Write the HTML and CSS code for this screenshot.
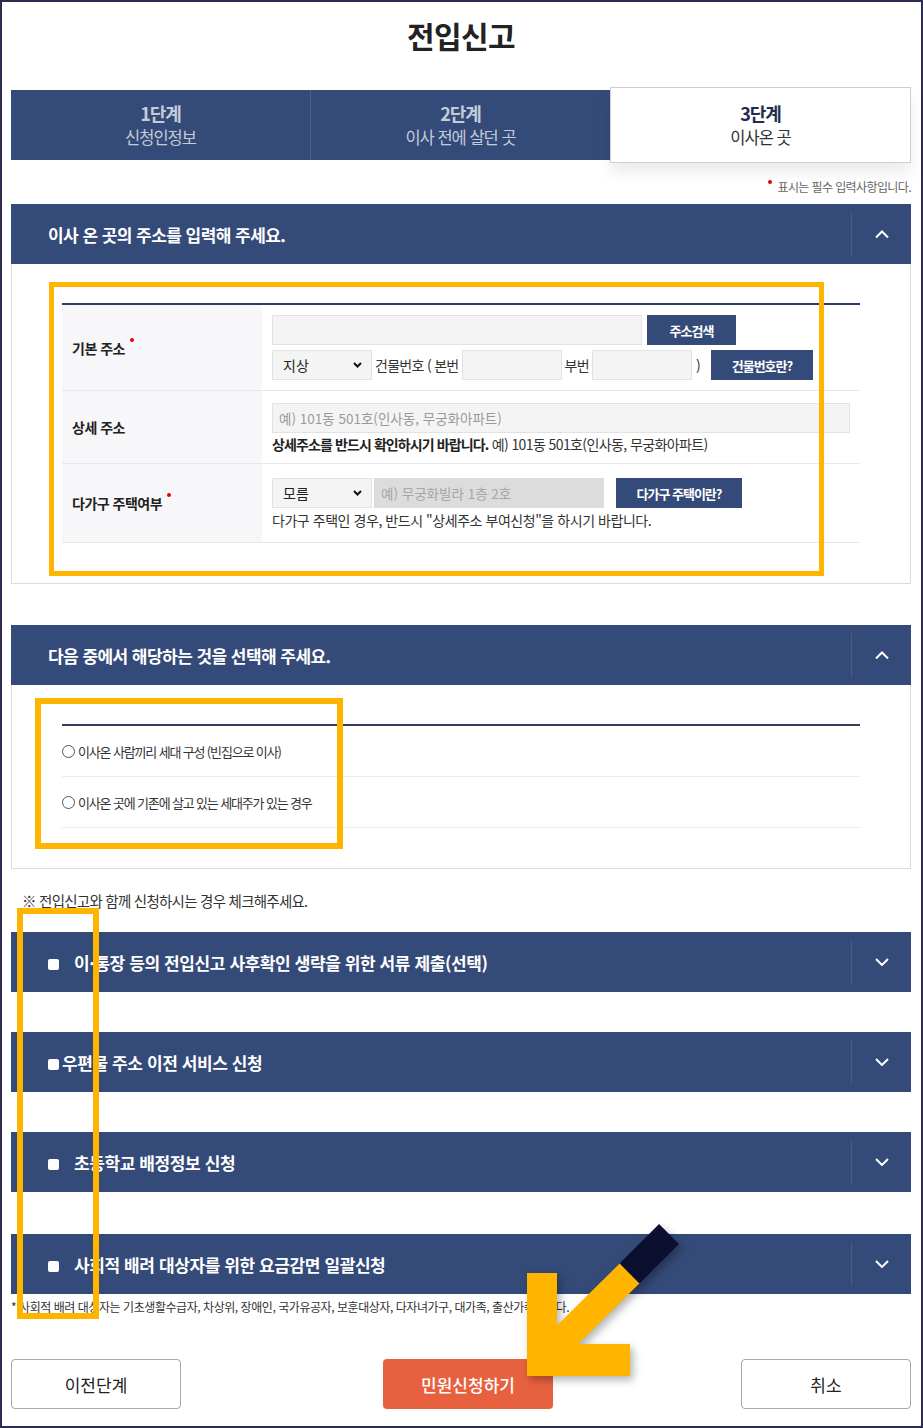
FILE: index.html
```html
<!DOCTYPE html>
<html lang="ko">
<head>
<meta charset="utf-8">
<title>전입신고</title>
<link rel="stylesheet" href="styles.css">
</head>
<body>
<div class="page">
  <h1 class="title">전입신고</h1>

  <div class="steps">
    <div class="step"><strong>1단계</strong><span>신청인정보</span></div>
    <div class="step"><strong>2단계</strong><span>이사 전에 살던 곳</span></div>
    <div class="step active"><strong>3단계</strong><span>이사온 곳</span></div>
  </div>

  <p class="req-note"><i class="dot dot-note"></i>표시는 필수 입력사항입니다.</p>

  <section class="panel">
    <div class="panel-head">
      <h2>이사 온 곳의 주소를 입력해 주세요.</h2>
      <span class="toggle"><svg width="14" height="8" viewBox="0 0 14 8"><polyline points="1,7.5 7,1.5 13,7.5" fill="none" stroke="#fff" stroke-width="2"/></svg></span>
    </div>
    <div class="panel-body">
      <div class="form-table">
        <div class="row row-1">
          <div class="th"><span>기본 주소<i class="dot dot-label"></i></span></div>
          <div class="td">
            <div class="line">
              <input class="field field-addr" type="text">
              <button class="btn-navy btn-search">주소검색</button>
            </div>
            <div class="line">
              <div class="select"><span>지상</span><svg width="9" height="6" viewBox="0 0 9 6"><polyline points="1,1 4.5,4.5 8,1" fill="none" stroke="#111" stroke-width="2"/></svg></div>
              <span class="txt t-bldg">건물번호 ( 본번</span>
              <input class="field field-num" type="text">
              <span class="txt t-sub">부번</span>
              <input class="field field-num" type="text">
              <span class="txt t-paren">)</span>
              <button class="btn-navy btn-bldg">건물번호란?</button>
            </div>
          </div>
        </div>
        <div class="row row-2">
          <div class="th"><span>상세 주소</span></div>
          <div class="td">
            <input class="field field-detail" type="text" placeholder="예) 101동 501호(인사동, 무궁화아파트)">
            <p class="help"><b>상세주소를 반드시 확인하시기 바랍니다.</b> 예) 101동 501호(인사동, 무궁화아파트)</p>
          </div>
        </div>
        <div class="row row-3">
          <div class="th"><span>다가구 주택여부<i class="dot dot-label"></i></span></div>
          <div class="td">
            <div class="line">
              <div class="select"><span>모름</span><svg width="9" height="6" viewBox="0 0 9 6"><polyline points="1,1 4.5,4.5 8,1" fill="none" stroke="#111" stroke-width="2"/></svg></div>
              <input class="field field-multi" type="text" placeholder="예) 무궁화빌라 1층 2호" disabled>
              <button class="btn-navy btn-multi">다가구 주택이란?</button>
            </div>
            <p class="help">다가구 주택인 경우, 반드시 "상세주소 부여신청"을 하시기 바랍니다.</p>
          </div>
        </div>
      </div>
    </div>
  </section>

  <section class="panel panel-2">
    <div class="panel-head">
      <h2>다음 중에서 해당하는 것을 선택해 주세요.</h2>
      <span class="toggle"><svg width="14" height="8" viewBox="0 0 14 8"><polyline points="1,7.5 7,1.5 13,7.5" fill="none" stroke="#fff" stroke-width="2"/></svg></span>
    </div>
    <div class="panel-body">
      <div class="radio-list">
        <div class="radio-row"><i class="radio"></i>이사온 사람끼리 세대 구성 (빈집으로 이사)</div>
        <div class="radio-row"><i class="radio"></i>이사온 곳에 기존에 살고 있는 세대주가 있는 경우</div>
      </div>
    </div>
  </section>

  <p class="check-note">※ 전입신고와 함께 신청하시는 경우 체크해주세요.</p>

  <div class="check-panel"><span class="cb"></span><h3>이·통장 등의 전입신고 사후확인 생략을 위한 서류 제출(선택)</h3><span class="toggle"><svg width="14" height="8" viewBox="0 0 14 8"><polyline points="1,1 7,7 13,1" fill="none" stroke="#fff" stroke-width="2"/></svg></span></div>
  <div class="check-panel tight"><span class="cb"></span><h3>우편물 주소 이전 서비스 신청</h3><span class="toggle"><svg width="14" height="8" viewBox="0 0 14 8"><polyline points="1,1 7,7 13,1" fill="none" stroke="#fff" stroke-width="2"/></svg></span></div>
  <div class="check-panel"><span class="cb"></span><h3>초등학교 배정정보 신청</h3><span class="toggle"><svg width="14" height="8" viewBox="0 0 14 8"><polyline points="1,1 7,7 13,1" fill="none" stroke="#fff" stroke-width="2"/></svg></span></div>
  <div class="check-panel last"><span class="cb"></span><h3>사회적 배려 대상자를 위한 요금감면 일괄신청</h3><span class="toggle"><svg width="14" height="8" viewBox="0 0 14 8"><polyline points="1,1 7,7 13,1" fill="none" stroke="#fff" stroke-width="2"/></svg></span></div>

  <p class="foot-note">* 사회적 배려 대상자는 기초생활수급자, 차상위, 장애인, 국가유공자, 보훈대상자, 다자녀가구, 대가족, 출산가족입니다.</p>

  <div class="actions">
    <button class="btn-line">이전단계</button>
    <button class="btn-primary">민원신청하기</button>
    <button class="btn-line">취소</button>
  </div>

  <div class="mark mark-1"></div>
  <div class="mark mark-2"></div>
  <div class="mark mark-3"></div>

  <svg class="arrow" width="200" height="190" viewBox="500 1210 200 190">
    <line x1="540" y1="1362" x2="630" y2="1273" stroke="#ffb400" stroke-width="28"/>
    <line x1="629.5" y1="1273.5" x2="669" y2="1234" stroke="#0c0f30" stroke-width="28"/>
    <polygon points="527,1273 557,1273 557,1344 630,1344 630,1376 527,1376" fill="#ffb400"/>
  </svg>
</div>
</body>
</html>
```

FILE: styles.css
```css
* { box-sizing: border-box; }

html, body {
  margin: 0;
  padding: 0;
  background: #fff;
}

body {
  font-family: "Noto Sans CJK KR", "Noto Sans", sans-serif;
  color: #333;
}

.page {
  position: relative;
  width: 923px;
  height: 1428px;
  border: 2px solid #2e2c50;
  padding: 0 10px 0 9px;
  overflow: hidden;
}

.title {
  margin: 13px 0 0;
  height: 40px;
  line-height: 40px;
  font-size: 30px;
  font-weight: 700;
  text-align: center;
  color: #222;
  letter-spacing: -0.6px;
}

/* steps */
.steps {
  margin-top: 35px;
  height: 70px;
  display: flex;
  background: #344a78;
}

.step {
  flex: 1;
  display: flex;
  flex-direction: column;
  align-items: center;
  justify-content: center;
  color: rgba(255, 255, 255, 0.72);
  border-left: 1px solid rgba(255, 255, 255, 0.12);
}

.step:first-child { border-left: 0; }

.step strong {
  display: block;
  height: 23px;
  font-size: 18px;
  line-height: 22px;
  font-weight: 700;
  letter-spacing: -1px;
}

.step span {
  display: block;
  height: 23px;
  font-size: 16.5px;
  line-height: 24px;
  letter-spacing: -1px;
}

.step.active {
  margin: -3px 0;
  background: #fff;
  border: 1px solid #cfcfcf;
  color: #333;
  box-shadow: 0 10px 14px rgba(0, 0, 0, 0.08);
  position: relative;
  z-index: 1;
}

.step.active strong { color: #1f2d50; }

/* required note */
.req-note {
  margin: 19px 0 0;
  height: 16px;
  line-height: 16px;
  font-size: 12px;
  text-align: right;
  color: #666;
  letter-spacing: -0.6px;
}

.dot {
  display: inline-block;
  width: 4px;
  height: 4px;
  border-radius: 50%;
  background: #e60012;
}

.dot-note {
  margin-right: 5px;
  vertical-align: 8px;
}

.dot-label {
  margin-left: 5px;
  vertical-align: 12px;
}

/* panels */
.panel { margin-top: 9px; }
.panel-2 { margin-top: 41px; }

.panel-head {
  height: 60px;
  display: flex;
  align-items: center;
  background: #344a78;
  padding-left: 37px;
}

.panel-head h2 {
  flex: 1;
  margin: 0;
  font-size: 17px;
  font-weight: 700;
  color: #fff;
  letter-spacing: -0.55px;
}

.toggle {
  width: 60px;
  height: 44px;
  display: flex;
  align-items: center;
  justify-content: center;
  border-left: 1px solid rgba(255, 255, 255, 0.1);
}

.panel-body {
  border: 1px solid #dcdcdc;
  border-top: 0;
  padding: 39px 50px 40px;
}

/* form table */
.form-table { border-top: 2px solid #2b3b6a; }

.row {
  display: grid;
  grid-template-columns: 200px 1fr;
  border-bottom: 1px solid #e8e8e8;
}

.row-1 { height: 86px; }
.row-2 { height: 73px; }
.row-3 { height: 79px; }

.th {
  background: #f7f7f9;
  display: flex;
  align-items: center;
  padding-left: 10px;
  font-size: 14px;
  font-weight: 700;
  color: #222;
  letter-spacing: -0.5px;
}

.td {
  display: flex;
  flex-direction: column;
  justify-content: center;
  padding-left: 10px;
}

.line {
  display: flex;
  align-items: center;
  height: 30px;
}

.line + .line { margin-top: 5px; }

.field {
  height: 30px;
  border: 1px solid #e2e2e2;
  background: #f4f4f4;
  padding: 0 6px;
  font-family: inherit;
  font-size: 13.5px;
  color: #333;
  outline: none;
}

.field::placeholder { color: #9a9a9a; }

.field-addr { width: 370px; }
.field-num { width: 100px; }
.field-detail { width: 578px; }
.field-multi {
  width: 230px;
  margin-left: 2px;
  background: #dcdcdc;
  border-color: #dcdcdc;
}
.field-multi::placeholder { color: #a6a6a6; }

.select {
  width: 100px;
  height: 30px;
  border: 1px solid #e2e2e2;
  background: #f4f4f4;
  display: flex;
  align-items: center;
  justify-content: space-between;
  padding: 0 9px 0 10px;
  font-size: 14px;
  color: #222;
}

.txt {
  font-size: 14px;
  color: #333;
  letter-spacing: -0.7px;
  white-space: nowrap;
}

.t-bldg { margin: 0 3px; }
.t-sub { margin: 0 3px; }
.t-paren { margin: 0 11px 0 4px; }

.btn-navy {
  height: 30px;
  border: 0;
  background: #344a78;
  color: #fff;
  font-family: inherit;
  font-size: 13px;
  font-weight: 700;
  letter-spacing: -1px;
  padding: 0;
}

.btn-search { width: 89px; margin-left: 5px; }
.btn-bldg { width: 102px; }
.btn-multi { width: 126px; margin-left: 12px; }

.help {
  margin: 3px 0 0;
  height: 16px;
  line-height: 16px;
  font-size: 14px;
  color: #333;
  letter-spacing: -0.6px;
  white-space: nowrap;
}

.row-3 .help { margin-top: 4px; letter-spacing: -0.45px; }

.help b { color: #222; letter-spacing: -0.9px; }

/* radios */
.radio-list { border-top: 2px solid #3a3b5e; }

.radio-row {
  height: 51px;
  display: flex;
  align-items: center;
  border-bottom: 1px solid #ececec;
  font-size: 13px;
  color: #333;
  letter-spacing: -1.15px;
}

.radio {
  width: 13px;
  height: 13px;
  border: 1px solid #555;
  border-radius: 50%;
  margin-right: 3px;
}

/* check panels */
.check-note {
  margin: 22px 0 0;
  height: 20px;
  line-height: 20px;
  padding-left: 11px;
  font-size: 14.5px;
  color: #333;
  letter-spacing: -0.75px;
}

.check-panel {
  height: 60px;
  margin-top: 40px;
  display: flex;
  align-items: center;
  background: #344a78;
  padding-left: 37px;
}

.check-note + .check-panel { margin-top: 21px; }
.check-panel.last { margin-top: 42px; }

.cb {
  width: 11px;
  height: 11px;
  border-radius: 2px;
  background: #fff;
  margin-top: 4px;
  margin-right: 15px;
}

.check-panel.tight .cb { margin-right: 3px; }

.check-panel h3 {
  flex: 1;
  margin: 0;
  font-size: 17px;
  font-weight: 700;
  color: #fff;
  letter-spacing: -0.4px;
}

.foot-note {
  margin: 5px 0 0;
  height: 16px;
  line-height: 16px;
  font-size: 12px;
  color: #333;
  letter-spacing: -0.45px;
  white-space: nowrap;
}

/* actions */
.actions {
  margin-top: 44px;
  display: flex;
  justify-content: space-between;
}

.actions button {
  width: 170px;
  height: 50px;
  border-radius: 4px;
  font-family: inherit;
  font-size: 17px;
  cursor: pointer;
}

.btn-line {
  border: 1px solid #a9a9a9;
  background: #fff;
  color: #222;
}

.btn-primary {
  margin-left: 14px;
  border: 0;
  background: #e8613f;
  color: #fff;
  font-weight: 500;
}

/* annotation overlays */
.mark {
  position: absolute;
  border: 5px solid #ffb400;
  pointer-events: none;
}

.mark-1 { left: 47px; top: 280px; width: 775px; height: 294px; }
.mark-2 { left: 33px; top: 696px; width: 308px; height: 151px; border-width: 6px; }
.mark-3 { left: 15px; top: 906px; width: 82px; height: 411px; border-width: 6px; }

.arrow {
  position: absolute;
  left: 498px;
  top: 1208px;
  filter: drop-shadow(3px 4px 4px rgba(0, 0, 0, 0.3));
}
```
